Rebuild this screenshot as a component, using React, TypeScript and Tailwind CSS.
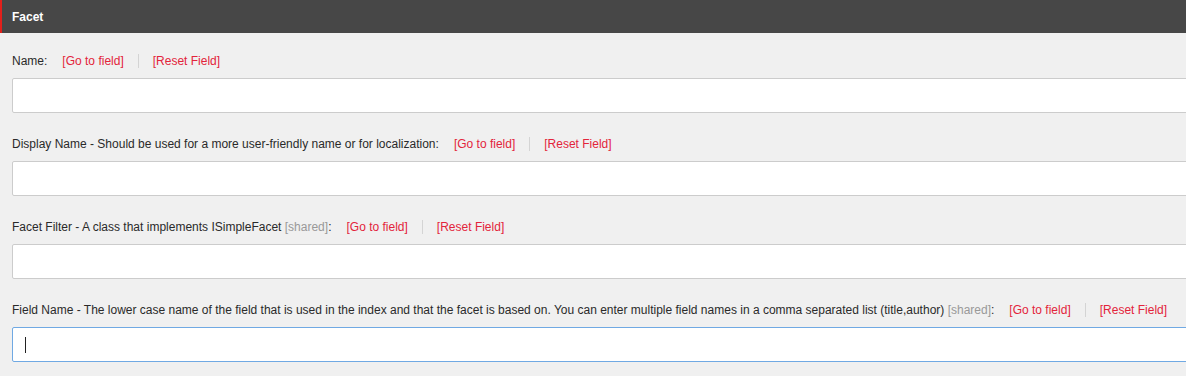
import React from 'react';

const fields = [
  { label: 'Name', shared: false, focused: false },
  { label: 'Display Name - Should be used for a more user-friendly name or for localization', shared: false, focused: false },
  { label: 'Facet Filter - A class that implements ISimpleFacet', shared: true, focused: false },
  {
    label:
      'Field Name - The lower case name of the field that is used in the index and that the facet is based on. You can enter multiple field names in a comma separated list (title,author)',
    shared: true,
    focused: true,
  },
];

export default function App() {
  return (
    <div className="w-[1186px] h-[376px] overflow-hidden bg-[#f0f0f0] font-['Liberation_Sans',Arial,sans-serif] text-[12px] text-[#2a2a2a]">
      {/* section header */}
      <div className="h-[33px] bg-[#474747] border-l-2 border-[#e3201b] flex items-center pl-[10px]">
        <span className="text-white font-bold text-[12px]">Facet</span>
      </div>

      <div className="pl-[12px] pt-[20px]">
        {fields.map((f, i) => (
          <div key={i} className="mb-[23px]">
            <div className="flex items-center h-[16px] leading-[16px] whitespace-nowrap">
              <span>
                {f.label}
                {f.shared && <span className="text-[#999]"> [shared]</span>}:
              </span>
              <a className="ml-[15px] text-[#e3243b] cursor-pointer">[Go to field]</a>
              <span className="mx-[14px] w-px h-[14px] bg-[#d4d4d4]" />
              <a className="text-[#e3243b] cursor-pointer">[Reset Field]</a>
            </div>
            <div
              className={`mt-[9px] w-[1190px] h-[35px] bg-white rounded-[2px] border flex items-center pl-[12px] ${
                f.focused ? 'border-[#70a9e3]' : 'border-[#cccccc]'
              }`}
            >
              {f.focused && <span className="w-px h-[16px] bg-[#222]" />}
            </div>
          </div>
        ))}
      </div>
    </div>
  );
}
